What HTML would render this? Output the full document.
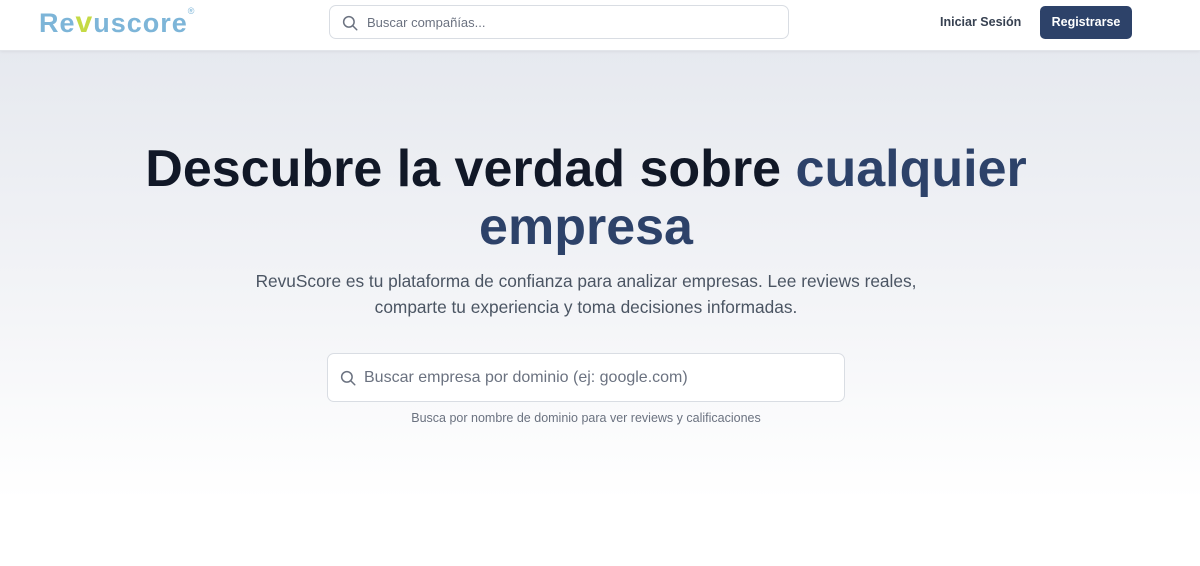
<!DOCTYPE html>
<html><head><meta charset="utf-8"><style>
*{box-sizing:border-box;margin:0;padding:0}
body{width:1200px;height:566px;overflow:hidden;font-family:"Liberation Sans",sans-serif;background:linear-gradient(#e6e9ef 50px,#f3f4f7 300px,#fff 500px);position:relative}
.hdr{position:absolute;left:0;top:0;width:1200px;height:51px;background:#fff;border-bottom:1px solid #e2e5ea;box-shadow:0 1px 3px rgba(0,0,0,.06)}
.logo{position:absolute;left:39px;top:6px;font-size:27px;font-weight:bold;color:#7db5d8;letter-spacing:1px}
.logo .v{color:#c5da45;font-size:30px}
.logo sup{font-size:9px;position:relative;top:-8px;font-weight:normal}
.s1{position:absolute;left:329px;top:5px;width:460px;height:34px;border:1px solid #d9dde3;border-radius:7px;background:#fff}
.s1 span{position:absolute;left:37px;top:9px;font-size:13px;color:#6b7280}
.s1 svg{position:absolute;left:11px;top:8px}
.login{position:absolute;left:940px;top:15px;font-size:12.5px;font-weight:bold;color:#374151}
.reg{position:absolute;left:1040px;top:6px;width:92px;height:33px;background:#2d4269;border-radius:5px;color:#fff;font-size:12.5px;font-weight:bold;text-align:center;line-height:33px}
h1{position:absolute;left:0;width:1172px;top:140px;text-align:center;font-size:52px;line-height:58px;color:#111827;font-weight:bold}
h1 span{color:#2d4269}
p.d{position:absolute;left:0;width:1172px;top:268px;text-align:center;font-size:17.3px;line-height:26px;color:#4b5563}
.s2{position:absolute;left:327px;top:353px;width:518px;height:49px;border:1px solid #d9dde3;border-radius:7px;background:#fff}
.s2 span{position:absolute;left:36px;top:15px;font-size:16px;color:#6b7280}
.s2 svg{position:absolute;left:11px;top:15px}
.hint{position:absolute;left:0;width:1172px;top:411px;text-align:center;font-size:12.5px;color:#6b7280}
</style></head><body>
<div class="hdr">
<div class="logo">Re<span class="v">v</span>uscore<sup>®</sup></div>
<div class="s1"><svg width="18" height="18" viewBox="0 0 24 24" fill="none" stroke="#6b7280" stroke-width="2" stroke-linecap="round"><circle cx="10.5" cy="10.5" r="7"/><path d="M16 16l5 5"/></svg><span>Buscar compañías...</span></div>
<div class="login">Iniciar Sesión</div>
<div class="reg">Registrarse</div>
</div>
<h1>Descubre la verdad sobre <span>cualquier<br>empresa</span></h1>
<p class="d">RevuScore es tu plataforma de confianza para analizar empresas. Lee reviews reales,<br>comparte tu experiencia y toma decisiones informadas.</p>
<div class="s2"><svg width="18" height="18" viewBox="0 0 24 24" fill="none" stroke="#6b7280" stroke-width="2" stroke-linecap="round"><circle cx="10.5" cy="10.5" r="7"/><path d="M16 16l5 5"/></svg><span>Buscar empresa por dominio (ej: google.com)</span></div>
<div class="hint">Busca por nombre de dominio para ver reviews y calificaciones</div>
</body></html>
